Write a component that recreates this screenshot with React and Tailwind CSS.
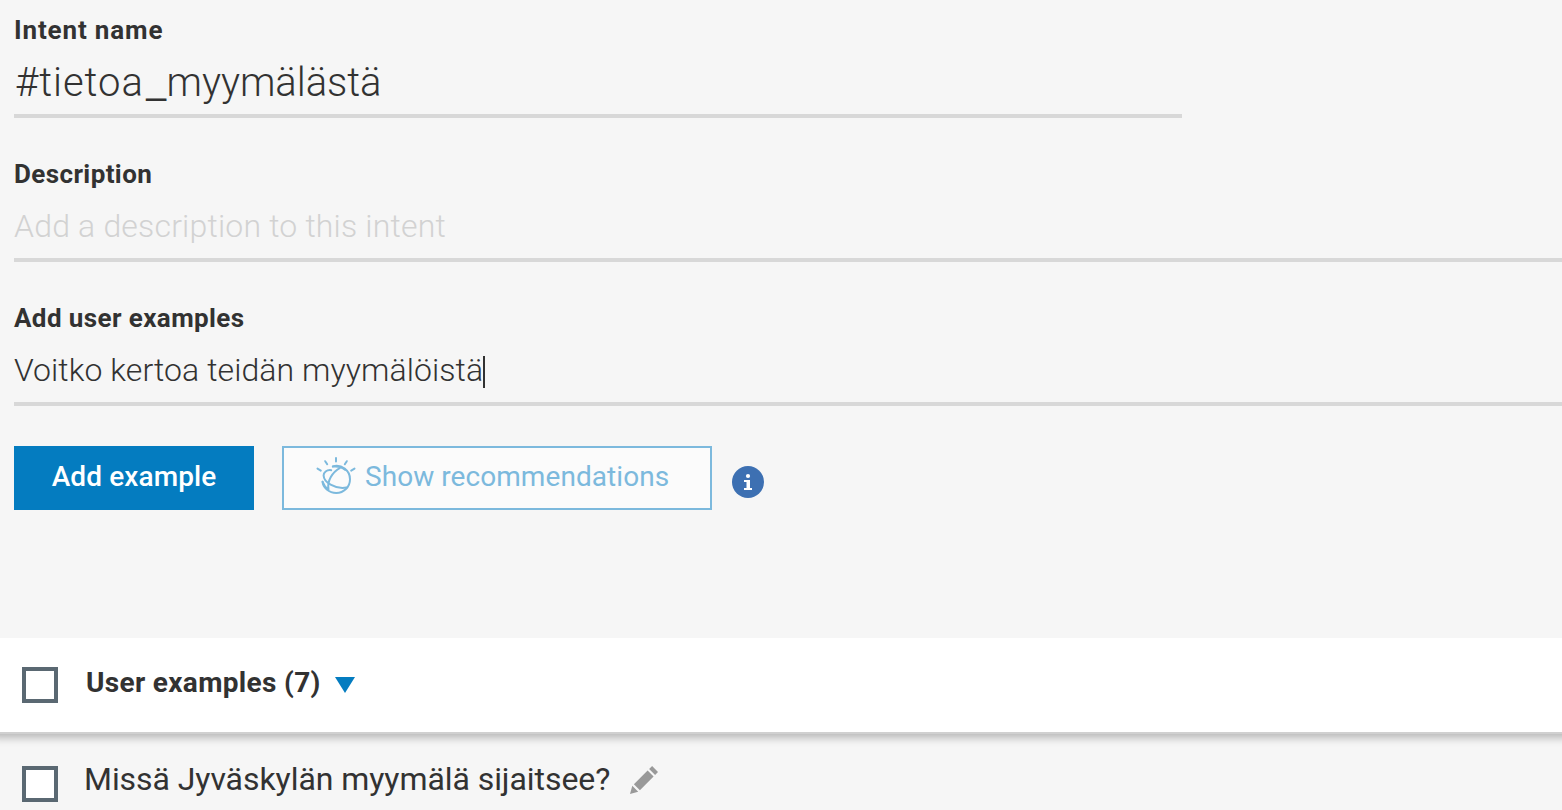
import React from "react";

function Field({ label, labelClass, className, children }) {
  return (
    <div className={className}>
      <div className={"text-[26px] leading-8 font-bold " + labelClass}>{label}</div>
      {children}
    </div>
  );
}

function WatsonIcon() {
  return (
    <svg className="-mt-px h-10 w-10 shrink-0" viewBox="0 0 40 40" fill="none" stroke="#7cb9dd" strokeWidth="2" strokeLinecap="round">
      <path d="M20 2v3.500M9.200 5.200l2 3M30.800 5.200l-2 3M1.500 12.600l3.300 2M38.500 12.600l-3.300 2" />
      <path d="M16.800 10.400C25.500 8 34 14.500 34 23.200C34 31 27.800 37 20.300 37C13 37 6.800 31.500 6.600 25.800" />
      <path d="M15.200 14.200C10.500 13.600 7.600 16.500 7.600 19.500C7.800 26 18.500 33.500 30.500 31.600" />
      <path d="M17 10.600C21.500 10.200 26 11 29 13.800M24 11.800C16.500 16 10.800 25 12.500 33.500M6.600 25.800C7.700 29 9.500 31.500 12.500 33.500" />
    </svg>
  );
}

function Checkbox() {
  return <span role="checkbox" aria-checked="false" className="h-9 w-9 shrink-0 border-4 border-[#5a6872] bg-white" />;
}

export default function App() {
  return (
    <div className="flex h-[810px] w-full flex-col overflow-hidden bg-[#f6f6f6] font-['Roboto',sans-serif] whitespace-nowrap text-[#323232]">
      <section className="flex h-[638px] shrink-0 flex-col pt-3.5 pl-3.5">
        <Field label="Intent name" labelClass="tracking-[0.86px]">
          <div className="mt-3 h-[60px] w-[1168px] border-b-4 border-[#d8d8d8] pt-px pl-px text-[40px] leading-[48px] font-[350]">
            <span className="tracking-[0.95px]">#tietoa</span>
            <span className="ml-0.5 align-[-3px] text-[48px] leading-[30px]">_</span>
            <span className="tracking-[-0.05px]">myymälästä</span>
          </div>
        </Field>
        <Field label="Description" labelClass="tracking-[0.4px]" className="mt-10">
          <div className="mt-4 border-b-4 border-[#d8d8d8] pb-3 text-[32px] leading-10 font-[350] tracking-[0.18px] text-[#d2d2d2]">
            Add a description to this intent
          </div>
        </Field>
        <Field label="Add user examples" labelClass="tracking-[0.4px]" className="mt-10">
          <div className="mt-4 flex items-center border-b-4 border-[#d8d8d8] pb-3 text-[32px] leading-10 font-[350]">
            <span className="tracking-[0.07px]">Voitko kertoa teidän myymälöistä</span>
            <span className="mt-1 h-8 w-0.5 bg-[#323232]" />
          </div>
        </Field>
        <div className="mt-10 flex items-start">
          <button className="flex h-16 w-60 items-center justify-center bg-[#047cc0] pb-[3px] text-[28px] font-medium tracking-[0.1px] text-white">
            <span>Add example</span>
          </button>
          <button className="ml-7 flex h-16 w-[430px] items-center border-2 border-[#7cb9dd] bg-[#fbfbfb] pb-[3px] pl-8 text-[28px] text-[#7cb9dd]">
            <WatsonIcon />
            <span className="ml-[9px] tracking-[0.06px]">Show recommendations</span>
          </button>
          <svg className="mt-5 ml-5 h-8 w-8" viewBox="0 0 32 32">
            <circle cx="16" cy="16" r="16" fill="#3d70b2" />
            <circle cx="16" cy="10" r="2.100" fill="#fff" />
            <path d="M12 14h6v8h2v2h-8v-2h2.500v-6H12z" fill="#fff" />
          </svg>
        </div>
      </section>
      <section className="z-10 flex h-24 shrink-0 items-center border-b-2 border-[#d0d0d0] bg-white pl-[22px] shadow-[0_-4px_8px_8px_rgba(0,0,0,0.25)] [clip-path:inset(0_0_-16px_0)]">
        <Checkbox />
        <span className="ml-7 pb-1 text-[28px] leading-9 font-bold tracking-[0.33px]">User examples (7)</span>
        <svg className="ml-3.5 h-4 w-5" viewBox="0 0 20 16">
          <path d="M0 0h20L10 16z" fill="#047cc0" />
        </svg>
      </section>
      <section className="flex h-[76px] shrink-0 items-start pl-[22px]">
        <div className="mt-8 flex">
          <Checkbox />
        </div>
        <span className="mt-[25px] ml-[26px] text-[32px] leading-10 tracking-[-0.06px]">Missä Jyväskylän myymälä sijaitsee?</span>
        <svg className="mt-8 ml-5 h-7 w-7" viewBox="0 0 28 28" fill="#999">
          <path d="M0 28l2.300-8.200 5.900 5.900zM3.900 18.200L17.600 4.500l6 6L9.900 24.200zM19.100 3l3-3L28 6l-2.900 3z" />
        </svg>
      </section>
    </div>
  );
}
